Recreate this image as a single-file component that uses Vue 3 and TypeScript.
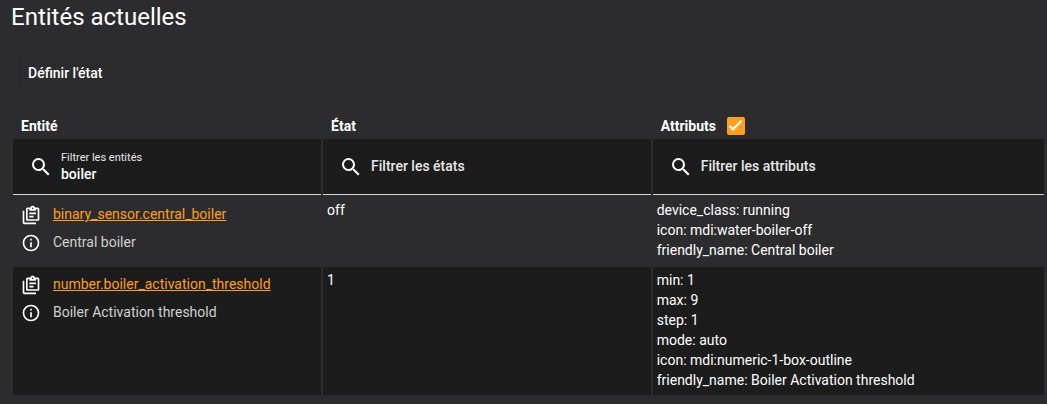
<script setup lang="ts">
import { reactive, ref } from 'vue'

interface Entity {
  id: string
  name: string
  state: string
  attributes: [string, string][]
}

interface Filter {
  key: string
  label: string
  value: string
}

const icons = {
  magnify:
    'M9.5,3A6.5,6.5 0 0,1 16,9.5C16,11.11 15.41,12.59 14.44,13.73L14.71,14H15.5L20.5,19L19,20.5L14,15.5V14.71L13.73,14.44C12.59,15.41 11.11,16 9.5,16A6.5,6.5 0 0,1 3,9.5A6.5,6.5 0 0,1 9.5,3M9.5,5C7,5 5,7 5,9.5C5,12 7,14 9.5,14C12,14 14,12 14,9.5C14,7 12,5 9.5,5Z',
  clipboard:
    'M4,7V21H18V23H4C2.9,23 2,22.1 2,21V7H4M20,3C21.1,3 22,3.9 22,5V17C22,18.1 21.1,19 20,19H8C6.9,19 6,18.1 6,17V5C6,3.9 6.9,3 8,3H11.18C11.6,1.84 12.7,1 14,1C15.3,1 16.4,1.84 16.82,3H20M14,3C13.45,3 13,3.45 13,4C13,4.55 13.45,5 14,5C14.55,5 15,4.55 15,4C15,3.45 14.55,3 14,3M10,7V5H8V17H20V5H18V7H10M15,15H10V13H15V15M18,11H10V9H18V11Z',
  info: 'M11,9H13V7H11M12,20C7.59,20 4,16.41 4,12C4,7.59 7.59,4 12,4C16.41,4 20,7.59 20,12C20,16.41 16.41,20 12,20M12,2A10,10 0 0,0 2,12A10,10 0 0,0 12,22A10,10 0 0,0 22,12A10,10 0 0,0 12,2M11,17H13V11H11V17Z',
}

const filters = reactive<Filter[]>([
  { key: 'entity', label: 'Filtrer les entités', value: 'boiler' },
  { key: 'state', label: 'Filtrer les états', value: '' },
  { key: 'attributes', label: 'Filtrer les attributs', value: '' },
])

const showAttributes = ref(true)

const entities: Entity[] = [
  {
    id: 'binary_sensor.central_boiler',
    name: 'Central boiler',
    state: 'off',
    attributes: [
      ['device_class', 'running'],
      ['icon', 'mdi:water-boiler-off'],
      ['friendly_name', 'Central boiler'],
    ],
  },
  {
    id: 'number.boiler_activation_threshold',
    name: 'Boiler Activation threshold',
    state: '1',
    attributes: [
      ['min', '1'],
      ['max', '9'],
      ['step', '1'],
      ['mode', 'auto'],
      ['icon', 'mdi:numeric-1-box-outline'],
      ['friendly_name', 'Boiler Activation threshold'],
    ],
  },
]
</script>

<template>
  <main class="page">
    <h1 class="title">Entités actuelles</h1>

    <button type="button" class="panel">Définir l'état</button>

    <table class="entities">
      <colgroup>
        <col class="col-entity" />
        <col class="col-state" />
        <col />
      </colgroup>
      <thead>
        <tr class="headings">
          <th scope="col">Entité</th>
          <th scope="col">État</th>
          <th scope="col">
            <label class="toggle">
              Attributs
              <input v-model="showAttributes" type="checkbox" />
            </label>
          </th>
        </tr>
        <tr>
          <th v-for="filter in filters" :key="filter.key" class="filter-cell">
            <div class="filter" :class="{ filled: filter.value }">
              <svg class="search" viewBox="0 0 24 24" aria-hidden="true">
                <path :d="icons.magnify" />
              </svg>
              <div class="field">
                <label :for="`filter-${filter.key}`">{{ filter.label }}</label>
                <input
                  :id="`filter-${filter.key}`"
                  v-model="filter.value"
                  type="text"
                  :placeholder="filter.label"
                />
              </div>
            </div>
          </th>
        </tr>
      </thead>
      <tbody>
        <tr v-for="entity in entities" :key="entity.id">
          <td>
            <div class="line">
              <button type="button" class="icon" aria-label="Copier l'identifiant">
                <svg viewBox="0 0 24 24"><path :d="icons.clipboard" /></svg>
              </button>
              <a href="#">{{ entity.id }}</a>
            </div>
            <div class="line">
              <button type="button" class="icon" aria-label="Plus d'informations">
                <svg viewBox="0 0 24 24"><path :d="icons.info" /></svg>
              </button>
              <span class="name">{{ entity.name }}</span>
            </div>
          </td>
          <td>{{ entity.state }}</td>
          <td>
            <template v-if="showAttributes">
              <div v-for="[key, value] in entity.attributes" :key="key">{{ key }}: {{ value }}</div>
            </template>
          </td>
        </tr>
      </tbody>
    </table>
  </main>
</template>

<style>
body {
  margin: 0;
  background: #2c2c2e;
}
</style>

<style scoped>
.page {
  box-sizing: border-box;
  padding: 0 1px 7px 11px;
  color: #fff;
  font: 14px/20px Roboto, sans-serif;
}

.title {
  margin: 0;
  font-size: 24px;
  font-weight: 400;
  line-height: 34px;
}

.panel {
  display: block;
  box-sizing: border-box;
  width: calc(100% - 7px);
  min-height: 50px;
  margin: 15px 0 14px 8px;
  padding: 0 8px 2px;
  border: 1px solid #28282a;
  border-right: 0;
  border-radius: 12px 0 0 12px;
  background: none;
  color: inherit;
  font: inherit;
  font-weight: 500;
  text-align: left;
}

.entities {
  width: 100%;
  table-layout: fixed;
  border-spacing: 2px;
}

.col-entity {
  width: 30%;
}

.col-state {
  width: 31.9%;
}

.headings th {
  height: 22px;
  padding: 0 8px;
  font-weight: 700;
  text-align: left;
}

.toggle {
  display: flex;
  align-items: center;
  gap: 11px;
}

.toggle input {
  appearance: none;
  display: grid;
  place-items: center;
  width: 18px;
  height: 18px;
  margin: 0;
  border-radius: 2px;
}

.toggle input:not(:checked) {
  border: 2px solid #9b9b9b;
}

.toggle input:checked {
  background: #ff9f1c;
}

.toggle input:checked::before {
  content: '';
  box-sizing: border-box;
  width: 13px;
  height: 6px;
  margin-bottom: 4px;
  border: solid #fff;
  border-width: 0 0 2px 2px;
  transform: rotate(-45deg);
}

.filter-cell {
  padding: 0;
  font-weight: 400;
  text-align: left;
}

.filter {
  display: flex;
  align-items: center;
  gap: 8px;
  box-sizing: border-box;
  height: 56px;
  padding: 0 16px;
  border-bottom: 1px solid #d3d7d3;
  background: #1c1c1c;
}

.search {
  flex: none;
  width: 24px;
  height: 24px;
  fill: #fff;
}

.field {
  display: flex;
  flex: 1;
  flex-direction: column;
  min-width: 0;
  padding-bottom: 2px;
}

.filled .field {
  padding-bottom: 0;
}

.field label {
  display: none;
  color: #e8e8e8;
  font-size: 11px;
  line-height: 14px;
}

.filled .field label {
  display: block;
}

.field input {
  width: 100%;
  height: 18px;
  padding: 0;
  border: 0;
  outline: 0;
  background: none;
  color: #fff;
  font: inherit;
  font-weight: 500;
}

.field input::placeholder {
  color: #e8e8e8;
  opacity: 1;
}

tbody td {
  padding: 3px 4px 5px;
  vertical-align: top;
  overflow-wrap: anywhere;
}

tbody tr:nth-child(even) td {
  background: #1c1c1c;
}

.line {
  display: flex;
  align-items: flex-start;
  gap: 12px;
  padding: 5px 4px 3px;
  line-height: 18px;
}

.icon {
  flex: none;
  width: 20px;
  height: 20px;
  padding: 0;
  border: 0;
  background: none;
}

.icon svg {
  display: block;
  fill: #fff;
}

.line a {
  color: #ff9f1c;
}

.name {
  color: #d0d0d0;
}
</style>
